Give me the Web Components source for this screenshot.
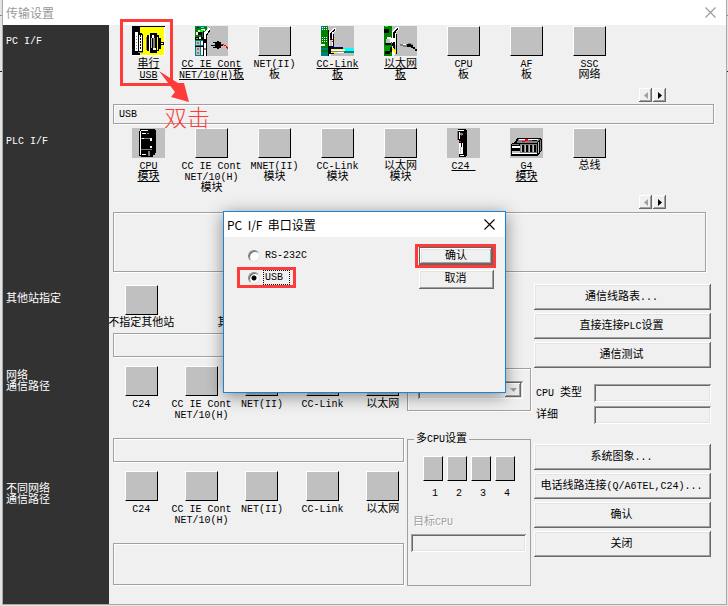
<!DOCTYPE html>
<html lang="zh-CN">
<head>
<meta charset="utf-8">
<title>传输设置</title>
<style>
html { height: 100%; }
body {
  margin: 0; min-height: 100%;
  background: linear-gradient(#888, #888) 0 15px / 100% 1px no-repeat, linear-gradient(#222, #222) 0 71px / 100% 1px no-repeat, #e4e4e4;
  font: 10px/11px "Liberation Mono", "Noto Sans CJK SC", monospace;
  color: #000;
}
</style>
</head>
<body>
<transfer-window></transfer-window>
<script>
const BASE = `
  *, *::before, *::after { box-sizing: border-box; }
  :host { display: block; }
  button, input, select { font: inherit; color: inherit; margin: 0; border-radius: 0; }
  .ln { display: block; height: 11px; white-space: pre; }
  .z { font-size: 11px; line-height: 11px; }
`;
const zh = t => t.replace(/[\u3400-\u9fff]+/g, '<span class="z">$&</span>');
const lines = t => t.split('|').map(s => `<span class="ln">${zh(s)}</span>`).join('');
const define = (name, render) => customElements.define(name, class extends HTMLElement {
  connectedCallback() {
    if (this.shadowRoot) return;
    this.attachShadow({ mode: 'open' }).innerHTML = render(this);
  }
});

/* Pictures on a 33 x 30 grid */
const r = (x, y, w, h, f) => `<rect x="${x}" y="${y}" width="${w}" height="${h}" fill="${f}"/>`;
const p = (d, f) => `<path d="${d}" fill="${f}"/>`;
const G = '#c0c0c0', D = '#808080', K = '#000', W = '#fff', N = '#008000', T = '#008080';
const ART = {
  serial: r(0,0,33,30,'#ff0') + r(0,0,33,1,K) + r(0,0,8,30,K) + r(32,1,1,29,W) + r(0,29,33,1,W)
    + p('M3 6h3v19H3z', W) + p('M6 7h4v1h1v18H6z', K) + r(7,9,3,16,W) + [9,12,15,18,21].map(y => r(8,y,1,2,K) + r(4,y+1,1,1,D)).join('')
    + r(6,26,5,1,D) + p('M15 9h3V7h7v2h2v3h2v4h3v3h-3v4h-2v2h-2v2h-7v-2h-3z', K) + r(14,11,1,13,D)
    + r(17,9,1,16,W) + r(19,12,1,10,G) + r(20,9,2,3,W) + r(21,12,2,10,D) + r(21,22,3,2,W) + r(25,11,1,13,'#ff0') + r(29,17,2,1,W),
  cable: r(0,0,33,30,G) + r(0,0,12,14,N) + r(0,0,12,1,T) + r(2,1,2,1,K) + r(6,1,3,1,'#0ff') + p('M1 6h2V4h3V3h4v2H7v2H3v2H1z', W)
    + p('M3 6h4v2h2v3H6V9H3z', K) + r(5,4,4,2,'#0f0') + r(7,8,3,3,T) + r(0,11,8,3,K) + r(1,12,2,1,'#0f0') + r(4,11,2,2,W)
    + r(0,14,8,16,T) + [15,21,25].map(y => r(1,y,4,4,G) + r(2,y+1,2,2,D) + r(6,y,2,4,W)).join('') + r(0,20,8,1,K) + r(8,5,1,25,K)
    + p('M9 7l4-5h2v2l-4 6v20H9z', W) + p('M11 9l4-6v2l-3 5v20h-1z', K) + r(9,13,2,4,K) + r(9,22,2,2,D)
    + r(16,19,4,1,K) + r(18,16,4,1,K) + r(18,21,4,1,K) + p('M20 17h2v-2h2v1h2v2h2v2h-2v2h-2v1h-2v-2h-2z', K) + r(26,18,3,1,'#f00') + r(29,19,2,1,'#f00') + r(31,20,1,2,'#f00') + r(32,21,1,2,'#f00'),
  link: r(0,0,33,30,G) + r(0,0,7,30,N) + r(0,22,7,2,T) + r(0,26,7,4,T) + r(0,0,3,4,T)
    + [1,3,11,13,15].map(y => [1,3,5].map(x => r(x,y,1,1,W)).join('')).join('') + r(0,18,4,2,W) + r(7,4,1,26,K)
    + p('M8 6l4-4h3v2l-5 6v20H8z', W) + p('M9 7l5-5v2l-3 4v20h-2z', K) + r(11,6,1,22,W) + r(12,8,1,20,K)
    + [12,14].map(y => r(9,y,1,1,'#f00') + r(11,y+1,1,1,'#f00')).join('') + r(9,14,2,6,G) + r(8,20,5,8,K)
    + r(10,21,12,2,'#000080') + r(22,22,11,3,'#0ff') + r(10,23,14,1,'#ff0') + r(10,24,14,1,W) + r(23,25,10,2,T) + r(10,25,13,1,D) + r(10,26,6,1,'#ff0') + r(16,26,7,1,W),
  ether: r(0,0,33,30,G) + r(0,0,8,30,N) + r(0,3,5,4,K) + r(1,0,3,1,'#0f0') + r(0,20,7,6,'#00a000') + r(3,11,4,6,W) + r(2,13,4,4,G) + r(1,17,6,2,K) + r(1,25,5,3,K) + r(6,21,3,5,K)
    + p('M8 6l4-5h3v2l-5 7v20H8z', W) + p('M9 6l5-5v2l-3 5v15H9z', K) + r(11,7,1,12,W) + r(12,8,1,20,K) + r(7,12,4,4,W) + r(8,17,3,3,K)
    + r(8,22,2,3,'#ff0') + r(10,24,2,3,'#ff0') + r(8,27,3,2,W) + p('M16 18h8v-1h3v1h2v2h-5v1h-5v-1h-3z', D) + p('M23 18h4v1h2v2h2v2h2v2h-2v-2h-2v-1h-2v-1h-4z', K) + r(19,18,3,1,W),
  rack: r(0,0,33,30,G) + p('M8 1h15v1h1v23h-1v2h-2v2H9v-1H7V3h1z', K) + r(8,3,1,24,W) + r(9,2,7,1,W) + r(10,5,4,1,W) + r(15,5,2,1,D)
    + r(9,10,10,1,D) + r(18,10,2,3,W) + r(9,21,11,1,D) + r(18,18,2,2,W) + r(10,26,4,1,W) + r(16,23,2,5,D) + r(10,10,2,1,W),
  slim: r(0,0,33,30,G) + p('M11 1h7l2 2v25l-2 1h-6V12h-1z', K) + r(11,2,6,1,W) + r(10,3,1,9,D) + r(12,4,1,7,W) + r(13,5,3,2,D) + r(14,7,1,1,'#f00') + r(12,13,2,1,'#f00')
    + r(12,15,4,11,W) + r(13,19,1,6,G) + r(14,15,1,4,K) + r(13,27,4,1,W),
  plc: r(0,0,33,30,G) + p('M7 10h24l1 2v10l-4 6H1V17l1-2 3-1z', K) + p('M8 11h22l-3 4H7z', D) + r(9,11,19,1,W) + r(15,11,3,2,'#f00') + r(12,13,3,1,'#f00') + r(19,12,2,1,'#f00') + r(22,12,5,1,K)
    + r(2,18,8,2,W) + r(2,23,8,2,G) + r(2,16,7,1,D) + r(10,16,17,9,D) + [11,15,19,23].map(x => r(x,17,3,7,K) + r(x,17,1,7,G)).join('')
    + r(2,25,25,1,W) + r(28,14,1,11,G) + r(30,12,1,11,D)
};

define('iface-tile', el => `<style>${BASE}
  :host { display: flex; justify-content: center; min-width: 0; }
  button { display: flex; flex-direction: column; align-items: center; gap: 3px; padding: 0; border: 0; background: none; }
  .face { flex: none; width: 33px; height: 30px; background: #c0c0c0; border: 1px solid; border-color: #fff #000 #000 #fff; }
  svg { flex: none; display: block; width: 33px; height: 30px; }
  .linked .ln { text-decoration: underline; }
  </style><button type="button">${ART[el.getAttribute('art')]
    ? `<svg viewBox="0 0 33 30" shape-rendering="crispEdges" aria-hidden="true">${ART[el.getAttribute('art')]}</svg>`
    : '<span class="face"></span>'}<span class="${el.hasAttribute('linked') ? 'linked' : ''}">${lines(el.getAttribute('label'))}</span></button>`);

define('etched-field', () => `<style>${BASE}
  :host { display: flex; align-items: center; padding-left: 5px; border: 1px solid #a0a0a0; box-shadow: 1px 1px 0 #fff, inset 1px 1px 0 #fff; }
  </style><slot></slot>`);

define('classic-button', el => `<style>${BASE}
  button { display: block; width: 100%; height: 100%; padding: 0 2px 0 0; border: 0; background: #f0f0f0; white-space: nowrap;
    box-shadow: inset -1px -1px #696969, inset 1px 1px #fff, inset -2px -2px #a0a0a0, inset 2px 2px #e3e3e3; }
  :host([default]) button { border: 1px solid #646464; padding: 0; }
  </style><button type="button">${zh(el.getAttribute('label'))}</button>`);

define('page-scroller', () => `<style>${BASE}
  :host { display: flex; justify-content: flex-end; gap: 1px; }
  button { display: grid; place-items: center; width: 13px; height: 14px; padding: 0; border: 0; background: #f0f0f0; box-shadow: inset -1px -1px #696969, inset 1px 1px #fff, inset -2px -2px #a0a0a0; }
  button:disabled { color: #a0a0a0; }
  svg { display: block; width: 4px; height: 7px; }
  </style><button type="button" disabled aria-label="上一页"><svg viewBox="0 0 4 7"><path d="M4 0v7L0 3.5z" fill="currentColor"/></svg></button
  ><button type="button" aria-label="下一页"><svg viewBox="0 0 4 7"><path d="M0 0v7l4-3.5z" fill="currentColor"/></svg></button>`);

const SUNKEN = `background: #f0f0f0; border: 0; box-shadow: inset 1px 1px #a0a0a0, inset -1px -1px #fff, inset 2px 2px #696969, inset -2px -2px #e3e3e3;`;

define('side-labels', () => `<style>${BASE}
  :host { background: #323232; color: #fff; }
  section { padding: 11px 3px 0; }
  .pc { min-height: 100px; } .plc { min-height: 158px; } .other { min-height: 77px; } .net { min-height: 113px; }
  </style>
  <section class="pc">${lines('PC I/F')}</section><section class="plc">${lines('PLC I/F')}</section>
  <section class="other">${lines('其他站指定')}</section><section class="net">${lines('网络|通信路径')}</section>
  <section>${lines('不同网络|通信路径')}</section>`);

const tile = (label, art = '', linked = false) => `<iface-tile label="${label}" ${art && `art="${art}"`} ${linked ? 'linked' : ''}></iface-tile>`;

define('host-interfaces', () => `<style>${BASE}
  .strip { display: grid; grid-template-columns: repeat(8, minmax(0, 1fr)); padding: 0 93px 0 4px; }
  .pc { min-height: 62px; } .plc { min-height: 67px; margin-top: 4px; }
  page-scroller { padding-right: 48px; }
  .one { height: 20px; margin-top: 2px; }
  .big { height: 60px; margin: 3px 8px 0 0; }
  </style>
  <div class="strip pc">${tile('串行|USB','serial',true)}${tile('CC IE Cont|NET/10(H)板','cable',true)}${tile('NET(II)|板')}${tile('CC-Link|板','link',true)}${tile('以太网|板','ether',true)}${tile('CPU|板')}${tile('AF|板')}${tile('SSC|网络')}</div>
  <page-scroller></page-scroller>
  <etched-field class="one">USB</etched-field>
  <div class="strip plc">${tile('CPU|模块','rack',true)}${tile('CC IE Cont|NET/10(H)|模块')}${tile('MNET(II)|模块')}${tile('CC-Link|模块')}${tile('以太网|模块')}${tile('C24 ','slim',true)}${tile('G4|模块','plc',true)}${tile('总线')}</div>
  <page-scroller></page-scroller>
  <etched-field class="big"></etched-field>`);

const route = () => tile('C24') + tile('CC IE Cont|NET/10(H)') + tile('NET(II)') + tile('CC-Link') + tile('以太网');

define('station-routes', () => `<style>${BASE}
  :host { padding-top: 13px; }
  .strip { display: grid; grid-template-columns: repeat(5, minmax(0, 1fr)); margin: 0 -9px 0 -2px; min-height: 72px; }
  .other { grid-template-columns: minmax(0, 1fr) minmax(0, 3fr) minmax(0, 1fr); min-height: 48px; }
  etched-field { height: 24px; margin-bottom: 9px; }
  .last { height: 42px; margin: 0; }
  </style>
  <div class="strip other">${tile('不指定其他站')}${tile('其他站(单一网络)')}</div>
  <etched-field></etched-field>
  <div class="strip">${route()}</div>
  <etched-field></etched-field>
  <div class="strip">${route()}</div>
  <etched-field class="last"></etched-field>`);

define('cpu-settings', () => `<style>${BASE}
  :host { padding-top: 96px; }
  .mode { padding: 12px 7px 11px 10px; border: 1px solid #a0a0a0; box-shadow: 1px 1px 0 #fff, inset 1px 1px 0 #fff; }
  .combo { position: relative; height: 18px; }
  select { appearance: none; display: block; width: 100%; height: 100%; padding: 0 20px 0 4px; opacity: 1; ${SUNKEN} }
  .arrow { position: absolute; right: 2px; top: 2px; width: 16px; bottom: 2px; display: grid; place-items: center; pointer-events: none; background: #f0f0f0; box-shadow: inset -1px -1px #696969, inset 1px 1px #fff, inset -2px -2px #a0a0a0; }
  .arrow svg { display: block; width: 7px; height: 4px; }
  fieldset { min-width: 0; margin: 22px 0 0; padding: 11px 4px 33px 3px; border: 1px solid #a0a0a0; }
  legend { margin-left: 3px; padding: 1px 2px 0; }
  .cpus { display: flex; gap: 4px; padding-left: 12px; }
  .cpus button { display: flex; flex-direction: column; gap: 7px; align-items: center; width: 20px; padding: 0; border: 0; background: none; }
  .cpus i { display: block; width: 20px; height: 25px; background: #c0c0c0; border: 1px solid; border-color: #fff #000 #000 #fff; }
  .cpus .ln { padding-left: 4px; }
  label { display: block; margin: 18px 0 6px 2px; color: #a0a0a0; text-shadow: 1px 1px #fff; }
  input { display: block; width: 100%; height: 18px; ${SUNKEN} }
  </style>
  <div class="mode"><div class="combo"><select disabled aria-label="模式"></select><span class="arrow"><svg viewBox="0 0 7 4"><path d="M0 0h7L3.5 4z" fill="#a0a0a0"/></svg></span></div></div>
  <fieldset><legend>${lines('多CPU设置')}</legend>
    <div class="cpus">${[1,2,3,4].map(n => `<button type="button"><i></i><span class="ln">${n}</span></button>`).join('')}</div>
    <label for="target">${lines('目标CPU')}</label><input id="target" disabled>
  </fieldset>`);

define('link-actions', () => `<style>${BASE}
  :host { padding-top: 12px; }
  .group { display: grid; gap: 3px; }
  classic-button { height: 26px; }
  .info { display: grid; grid-template-columns: 58px minmax(0, 1fr); gap: 4px 2px; align-items: center; padding: 16px 0 20px; }
  label { padding-left: 2px; }
  input { width: 100%; height: 18px; ${SUNKEN} }
  </style>
  <div class="group"><classic-button label="通信线路表..."></classic-button><classic-button label="直接连接PLC设置"></classic-button><classic-button label="通信测试"></classic-button></div>
  <div class="info"><label for="type">${lines('CPU 类型')}</label><input id="type" readonly><label for="detail">${lines('详细')}</label><input id="detail" readonly></div>
  <div class="group"><classic-button label="系统图象..."></classic-button><classic-button label="电话线路连接(Q/A6TEL,C24)..."></classic-button><classic-button label="确认"></classic-button><classic-button label="关闭"></classic-button></div>`);

define('title-bar', () => `<style>${BASE}
  :host { display: flex; align-items: center; justify-content: space-between; background: #fff; font: 12px/16px "Noto Sans CJK SC", sans-serif; }
  span { white-space: pre; }
  button { display: block; padding: 0; border: 0; background: none; }
  svg { display: block; width: 11px; height: 11px; }
  </style><span><slot></slot></span><button type="button" aria-label="关闭"><svg viewBox="0 0 11 11"><path d="M.5.5l10 10M10.5.5l-10 10" fill="none" stroke="currentColor" stroke-width="1.1"/></svg></button>`);

define('serial-dialog', () => `<style>${BASE}
  :host { width: 283px; min-height: 182px; border: 1px solid #1883d7; background: #f0f0f0; box-shadow: 0 3px 16px rgba(0,0,0,.45); }
  title-bar { height: 25px; padding: 0 10px 0 3px; }
  form { display: flex; justify-content: space-between; align-items: flex-start; padding: 7px 9px 0 13px; }
  .ports { display: grid; gap: 1px; padding-top: 1px; justify-items: start; }
  label { display: flex; align-items: center; gap: 3px; height: 21px; padding: 0 8px; border: 3px solid transparent; }
  .marked { border-color: #fd3b3b; width: 59px; }
  input { appearance: none; flex: none; width: 12px; height: 12px; border-radius: 50%; border: 1px solid; border-color: #888 #e3e3e3 #e3e3e3 #888; background: #fff; box-shadow: inset 1px 1px #696969; }
  input:checked { background: radial-gradient(circle, #000 2px, #fff 3px); }
  b { font-weight: normal; padding: 1px 1px; border: 1px dotted transparent; }
  .marked b { border-color: #000; padding-right: 6px; }
  .acts { display: grid; gap: 2px; width: 81px; }
  .ok { border: 3px solid #fd3b3b; padding: 0 0 0 1px; }
  .ok classic-button { height: 18px; }
  .no { height: 19px; margin: 0 2px 0 4px; }
  </style>
  <title-bar>PC  I/F  串口设置</title-bar>
  <form><div class="ports">
    <label><input type="radio" name="port"><b>RS-232C</b></label>
    <label class="marked"><input type="radio" name="port" checked><b>USB</b></label></div>
    <div class="acts"><div class="ok"><classic-button default label="确认"></classic-button></div><classic-button class="no" label="取消"></classic-button></div></form>`);

define('click-note', () => `<style>${BASE}
  :host { position: absolute; left: 117px; top: 19px; pointer-events: none; color: #fd3b3b; }
  .box { width: 53px; height: 67px; border: 3px solid; }
  svg { position: absolute; left: 39px; top: 52px; width: 30px; height: 32px; }
  span { position: absolute; left: 44px; top: 84px; font: 300 23px/26px "Noto Sans CJK SC", sans-serif; white-space: nowrap; }
  </style><div class="box"></div><svg viewBox="0 0 30 32"><path d="M0 0L19 12L25 12L30 31L12 26L16 21Z" fill="currentColor"/></svg><span>双击</span>`);

define('transfer-window', () => `<style>${BASE}
  :host { position: relative; margin: 0 1px 0 2px; border: 1px solid #a9a9a9; border-top: 0; background: #f0f0f0; }
  .bar { height: 25px; padding: 0 10px 0 3px; color: #999; }
  .body { display: grid; grid-template-columns: 106px minmax(0, 1fr); }
  main { padding: 1px 12px 18px 4px; }
  .lower { display: grid; grid-template-columns: minmax(0, 1fr) 124px 177px; gap: 3px; padding-right: 3px; }
  .over { position: absolute; inset: 0; display: grid; place-items: center; }
  </style>
  <title-bar class="bar">传输设置</title-bar>
  <div class="body"><side-labels></side-labels><main><host-interfaces></host-interfaces>
    <div class="lower"><station-routes></station-routes><cpu-settings></cpu-settings><link-actions></link-actions></div></main></div>
  <click-note></click-note>
  <div class="over"><serial-dialog role="dialog"></serial-dialog></div>`);
</script>
</body>
</html>
